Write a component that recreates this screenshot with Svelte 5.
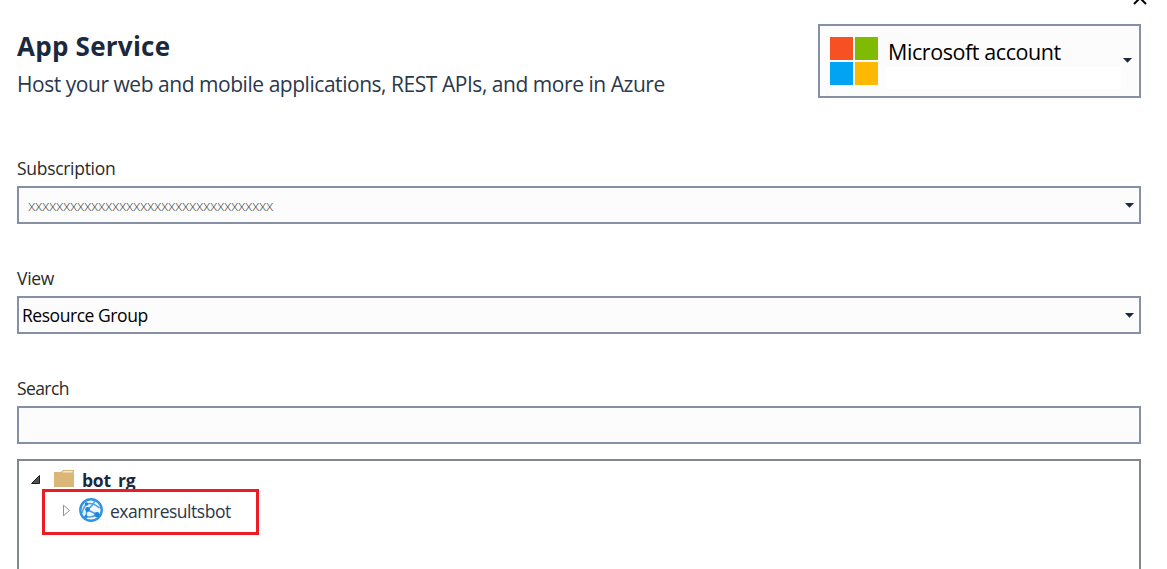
<script lang="ts">
  interface TreeNode {
    name: string;
    expanded: boolean;
  }

  let subscription = 'x'.repeat(35);
  let view = 'Resource Group';
  let search = '';

  let group: TreeNode = { name: 'bot_rg', expanded: true };
  let app: TreeNode = { name: 'examresultsbot', expanded: false };

  function toggleGroup(): void {
    group.expanded = !group.expanded;
  }
</script>

<div class="dialog">
  <svg class="close" width="16" height="16" viewBox="0 0 16 16" fill="none" stroke="#000" stroke-width="2">
    <path d="M2 2l12 12M14 2L2 14" />
  </svg>

  <header class="header">
    <div class="heading">
      <h1 class="title">App Service</h1>
      <p class="subtitle">Host your web and mobile applications, REST APIs, and more in Azure</p>
    </div>

    <div class="account" role="button" tabindex="0">
      <svg class="logo" width="48" height="48" viewBox="0 0 48 48">
        <path fill="#f65123" d="M0 0h23v23H0z" />
        <path fill="#80bb03" d="M25 0h23v23H25z" />
        <path fill="#00a4f2" d="M0 25h23v23H0z" />
        <path fill="#ffb903" d="M25 25h23v23H25z" />
      </svg>
      <div class="account-text">
        <span class="account-name">Microsoft account</span>
        <span class="account-mail"></span>
      </div>
      <svg class="arrow" width="9" height="5" viewBox="0 0 9 5"><path fill="#1b293e" d="M0 0h9L4.500 4.800z" /></svg>
    </div>
  </header>

  <div class="field">
    <span class="label">Subscription</span>
    <div class="box">
      <span class="redacted">{subscription}</span>
      <svg class="arrow" width="9" height="5" viewBox="0 0 9 5"><path fill="#1b293e" d="M0 0h9L4.500 4.800z" /></svg>
    </div>
  </div>

  <div class="field">
    <span class="label">View</span>
    <div class="box">
      <span class="value">{view}</span>
      <svg class="arrow" width="9" height="5" viewBox="0 0 9 5"><path fill="#1b293e" d="M0 0h9L4.500 4.800z" /></svg>
    </div>
  </div>

  <div class="field search">
    <label class="label" for="search">Search</label>
    <input id="search" class="box" type="text" bind:value={search} />
  </div>

  <div class="tree">
    <div class="node group" role="button" tabindex="0" on:click={toggleGroup} on:keydown={toggleGroup}>
      <svg class="expander" width="11" height="11" viewBox="0 0 11 11">
        <path fill="#505050" stroke="#1e1e1e" d="M9.500 1.500v8h-8z" />
      </svg>
      <svg class="folder" width="20" height="17" viewBox="0 0 20 17">
        <path fill="#dcb679" d="M0 2h7l2-2h11v17H0z" />
        <path fill="#f3ead8" d="M9.800 1h8.700v1.500H8.500z" />
      </svg>
      <span class="group-name">{group.name}</span>
    </div>

    {#if group.expanded}
      <div class="node selected">
        <svg width="9" height="13" viewBox="0 0 9 13">
          <path fill="#fff" stroke="#909090" d="M1.500 1.200v10.600l6-5.300z" />
        </svg>
        <svg class="globe" width="24" height="24" viewBox="0 0 24 24">
          <circle cx="12" cy="12" r="10.700" fill="#f0f8fe" stroke="#3493df" stroke-width="2.400" />
          <g fill="none" stroke="#4aa3e6" stroke-width="1.600">
            <path d="M7.500 6Q14 4 20.500 10M7.500 6Q4 10 3 15M8 11.500l10 5M8 11.500Q14 8 16 2.500M8 11.500l-1 7M7 18.500Q12 20 18 16.500" />
          </g>
          <g fill="#1b85dc">
            <circle cx="7.500" cy="6" r="1.800" />
            <circle cx="8.500" cy="11.500" r="2.400" />
            <circle cx="18" cy="16.500" r="2.600" />
            <circle cx="7" cy="18.500" r="1.600" />
          </g>
        </svg>
        <span class="app-name">{app.name}</span>
      </div>
    {/if}
  </div>
</div>

<style>
  :global(body) {
    margin: 0;
    overflow: hidden;
    background: #fff;
  }

  .dialog {
    position: relative;
    box-sizing: border-box;
    display: flex;
    flex-direction: column;
    height: 569px;
    padding: 24px 26px 0 17px;
    overflow: hidden;
    font-family: 'Open Sans', 'Noto Sans', sans-serif;
    color: #1b293e;
  }

  .close {
    position: absolute;
    top: -10px;
    right: 19px;
  }

  .header {
    display: flex;
    justify-content: space-between;
    height: 74px;
    margin-bottom: 59px;
  }

  .heading {
    padding-top: 4px;
  }

  .title {
    margin: 0;
    font-size: 26px;
    font-weight: 700;
    line-height: 36px;
    letter-spacing: 0.25px;
  }

  .subtitle {
    margin: 5px 0 0;
    font-size: 21px;
    line-height: 30px;
    letter-spacing: -0.46px;
    white-space: nowrap;
    color: #2b384c;
  }

  .account {
    box-sizing: border-box;
    display: flex;
    align-items: center;
    width: 323px;
    padding: 0 7px 0 10px;
    border: 2px solid #8590a6;
    background: #fcfcfc;
  }

  .account .arrow {
    margin-top: -2px;
  }

  .account-text {
    display: flex;
    flex: 1;
    flex-direction: column;
    margin: 3px 0 0 8px;
  }

  .account-name {
    padding-left: 2px;
    font-size: 21.500px;
    line-height: 29px;
    letter-spacing: -0.42px;
    color: #000;
  }

  .account-mail {
    height: 22px;
    margin: 1px 2px 0 0;
    background: #fff;
  }

  .field {
    display: flex;
    flex-direction: column;
    margin-bottom: 43px;
  }

  .search {
    margin-bottom: 15px;
  }

  .label {
    height: 29px;
    font-size: 17.500px;
    line-height: 22px;
    letter-spacing: -0.3px;
    color: #2a2a2a;
  }

  .search .label {
    letter-spacing: -0.6px;
  }

  .box {
    box-sizing: border-box;
    display: flex;
    align-items: center;
    justify-content: space-between;
    height: 38px;
    padding: 0 5px 0 3px;
    border: 2px solid #8590a6;
    border-radius: 0;
    outline: none;
    background: #fcfcfc;
  }

  .value {
    font-size: 17.500px;
    letter-spacing: -0.45px;
    color: #000;
  }

  .redacted {
    padding-left: 6px;
    font-size: 15px;
    font-weight: 300;
    letter-spacing: -0.46px;
    color: #555;
  }

  .tree {
    flex: 1;
    padding: 5px 0 0 11px;
    border: 2px solid #828790;
    border-bottom: 0;
  }

  .node {
    display: flex;
    align-items: center;
  }

  .group {
    height: 28px;
  }

  .expander {
    margin-top: -2px;
  }

  .folder {
    margin: -4px 8px 0 13px;
  }

  .group-name {
    margin-top: -1px;
    font-size: 17.500px;
    font-weight: 700;
    letter-spacing: -0.2px;
  }

  /* Sits over the lower edge of the row above. */
  .selected {
    position: relative;
    box-sizing: border-box;
    width: 217px;
    height: 46px;
    margin: -5px 0 0 12px;
    padding: 0 0 3px 17px;
    border: 3px solid #ed1c24;
    background: #fff;
  }

  .globe {
    margin: 0 7px 2px 8px;
  }

  .app-name {
    font-size: 17.500px;
    letter-spacing: -0.48px;
    color: #2b384c;
  }
</style>
